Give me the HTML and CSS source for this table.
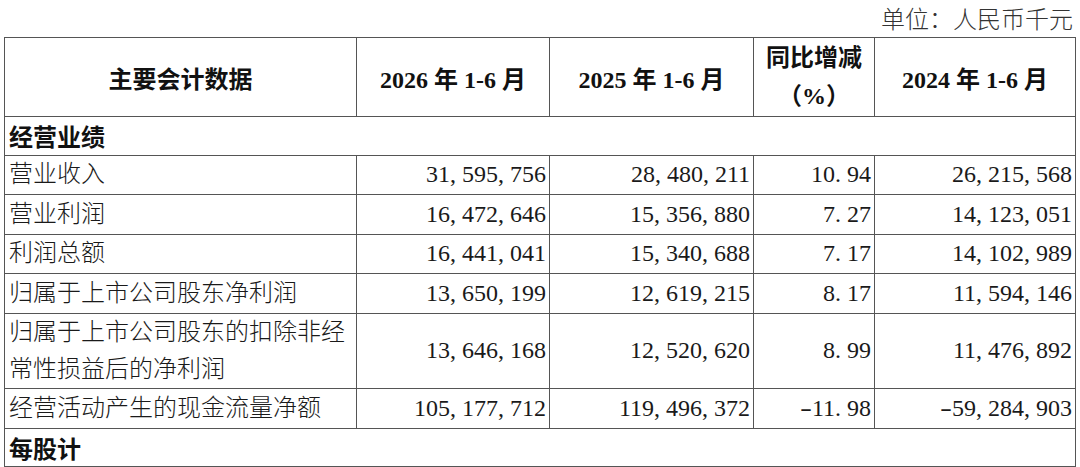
FILE: index.html
```html
<!DOCTYPE html>
<html lang="zh-CN">
<head>
<meta charset="utf-8">
<title>主要会计数据</title>
<link rel="stylesheet" href="styles.css">
</head>
<body>
<div class="page">
  <div class="unit">单位：人民币千元</div>
  <table class="data">
    <colgroup>
      <col class="c1"><col class="c2"><col class="c3"><col class="c4"><col class="c5">
    </colgroup>
    <thead>
      <tr class="head">
        <th>主要会计数据</th>
        <th>2026 年 1-6 月</th>
        <th>2025 年 1-6 月</th>
        <th><span class="hl">同比增减</span><span class="hl">（%）</span></th>
        <th>2024 年 1-6 月</th>
      </tr>
    </thead>
    <tbody>
      <tr class="sec"><td colspan="5">经营业绩</td></tr>
      <tr>
        <td class="lbl">营业收入</td>
        <td class="num">31<span class="p">,</span>595<span class="p">,</span>756</td>
        <td class="num">28<span class="p">,</span>480<span class="p">,</span>211</td>
        <td class="num">10<span class="p">.</span>94</td>
        <td class="num">26<span class="p">,</span>215<span class="p">,</span>568</td>
      </tr>
      <tr>
        <td class="lbl">营业利润</td>
        <td class="num">16<span class="p">,</span>472<span class="p">,</span>646</td>
        <td class="num">15<span class="p">,</span>356<span class="p">,</span>880</td>
        <td class="num">7<span class="p">.</span>27</td>
        <td class="num">14<span class="p">,</span>123<span class="p">,</span>051</td>
      </tr>
      <tr>
        <td class="lbl">利润总额</td>
        <td class="num">16<span class="p">,</span>441<span class="p">,</span>041</td>
        <td class="num">15<span class="p">,</span>340<span class="p">,</span>688</td>
        <td class="num">7<span class="p">.</span>17</td>
        <td class="num">14<span class="p">,</span>102<span class="p">,</span>989</td>
      </tr>
      <tr>
        <td class="lbl">归属于上市公司股东净利润</td>
        <td class="num">13<span class="p">,</span>650<span class="p">,</span>199</td>
        <td class="num">12<span class="p">,</span>619<span class="p">,</span>215</td>
        <td class="num">8<span class="p">.</span>17</td>
        <td class="num">11<span class="p">,</span>594<span class="p">,</span>146</td>
      </tr>
      <tr class="tall">
        <td class="lbl">归属于上市公司股东的扣除非经常性损益后的净利润</td>
        <td class="num">13<span class="p">,</span>646<span class="p">,</span>168</td>
        <td class="num">12<span class="p">,</span>520<span class="p">,</span>620</td>
        <td class="num">8<span class="p">.</span>99</td>
        <td class="num">11<span class="p">,</span>476<span class="p">,</span>892</td>
      </tr>
      <tr>
        <td class="lbl">经营活动产生的现金流量净额</td>
        <td class="num">105<span class="p">,</span>177<span class="p">,</span>712</td>
        <td class="num">119<span class="p">,</span>496<span class="p">,</span>372</td>
        <td class="num"><span class="m">-</span>11<span class="p">.</span>98</td>
        <td class="num"><span class="m">-</span>59<span class="p">,</span>284<span class="p">,</span>903</td>
      </tr>
      <tr class="sec"><td colspan="5">每股计</td></tr>
      <tr>
        <td class="lbl"></td><td class="num"></td><td class="num"></td><td class="num"></td><td class="num"></td>
      </tr>
    </tbody>
  </table>
</div>
</body>
</html>
```

FILE: styles.css
```css
html, body {
  margin: 0;
  padding: 0;
  background: #ffffff;
}

body {
  font-family: "Liberation Serif", "Noto Sans CJK SC", serif;
  font-size: 24px;
  color: #1a1a1a;
}

.page {
  padding: 0 5px 0 4px;
  overflow: hidden;
  height: 467px;
}

.unit {
  text-align: right;
  height: 37px;
  line-height: 40px;
  font-weight: 300;
  color: #333;
  padding-right: 2px;
}

.data {
  width: 1071px;
  border-collapse: collapse;
  table-layout: fixed;
}

.c1 { width: 352px; }
.c2 { width: 193px; }
.c3 { width: 204px; }
.c4 { width: 121px; }
.c5 { width: 201px; }

.data th,
.data td {
  border: 1px solid #555555;
  padding: 0 3px 0 3px;
  vertical-align: middle;
  white-space: nowrap;
  overflow: hidden;
}

.head th {
  height: 78px;
  font-weight: 700;
  text-align: center;
  color: #111;
}

.hl {
  display: block;
  line-height: 38px;
}

.data .sec td {
  height: 37.5px;
  font-weight: 700;
  text-align: left;
  padding-left: 4px;
  color: #111;
}

.data td {
  height: 38.5px;
}

.data .lbl {
  text-align: left;
  font-weight: 300;
  padding-left: 4px;
  padding-right: 2px;
  line-height: 37px;
  white-space: normal;
  word-break: break-all;
}

.data .tall td {
  height: 74.5px;
}

.num {
  text-align: right;
  font-weight: 400;
}

.p {
  display: inline-block;
  width: 0.5em;
  text-align: left;
}

.m {
  display: inline-block;
  width: 0.5em;
  text-align: center;
  transform: scaleX(1.5);
}
```
